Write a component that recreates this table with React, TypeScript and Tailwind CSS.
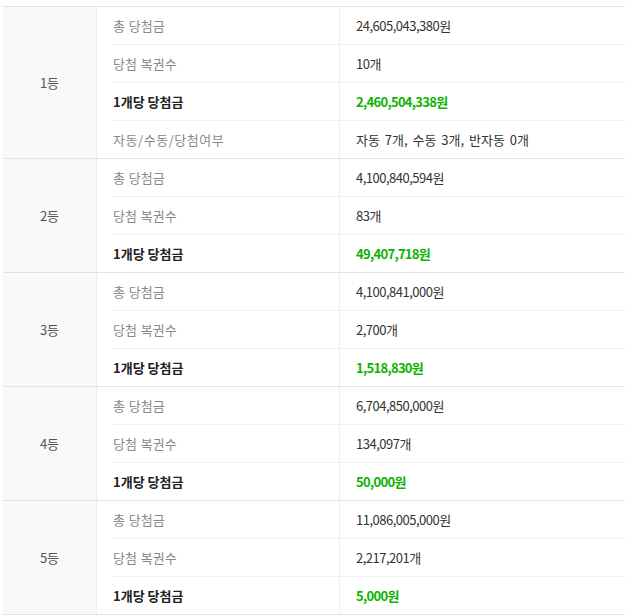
import * as React from "react";

type Row = { label: string; value: string; strong?: boolean; phrase?: boolean };
type Rank = { rank: string; rows: Row[] };

const data: Rank[] = [
    {
        rank: "1등",
        rows: [
            { label: "총 당첨금", value: "24,605,043,380원" },
            { label: "당첨 복권수", value: "10개" },
            { label: "1개당 당첨금", value: "2,460,504,338원", strong: true },
            { label: "자동/수동/당첨여부", value: "자동 7개, 수동 3개, 반자동 0개", phrase: true },
        ],
    },
    {
        rank: "2등",
        rows: [
            { label: "총 당첨금", value: "4,100,840,594원" },
            { label: "당첨 복권수", value: "83개" },
            { label: "1개당 당첨금", value: "49,407,718원", strong: true },
        ],
    },
    {
        rank: "3등",
        rows: [
            { label: "총 당첨금", value: "4,100,841,000원" },
            { label: "당첨 복권수", value: "2,700개" },
            { label: "1개당 당첨금", value: "1,518,830원", strong: true },
        ],
    },
    {
        rank: "4등",
        rows: [
            { label: "총 당첨금", value: "6,704,850,000원" },
            { label: "당첨 복권수", value: "134,097개" },
            { label: "1개당 당첨금", value: "50,000원", strong: true },
        ],
    },
    {
        rank: "5등",
        rows: [
            { label: "총 당첨금", value: "11,086,005,000원" },
            { label: "당첨 복권수", value: "2,217,201개" },
            { label: "1개당 당첨금", value: "5,000원", strong: true },
        ],
    },
];

function Label({ row }: { row: Row }) {
    if (row.strong) {
        return <span className="font-bold text-[#222]">{row.label}</span>;
    }
    if (row.phrase) {
        // slashes render a bit wider in the original font
        return <span className="text-[#888] tracking-[0.55px]">{row.label}</span>;
    }
    return <span className="text-[#888] [word-spacing:1px]">{row.label}</span>;
}

function Value({ row }: { row: Row }) {
    if (row.strong) {
        return <span className="font-bold text-[#0bb300] tracking-[-0.7px]">{row.value}</span>;
    }
    if (row.phrase) {
        return <span className="text-[#333] [word-spacing:2px]">{row.value}</span>;
    }
    return <span className="text-[#333] tracking-[-0.5px]">{row.value}</span>;
}

function RankGroup({ rank, rows }: Rank) {
    return (
        <div className="flex border-b border-[#e3e3e3]">
            <div className="w-[94px] shrink-0 bg-[#f8f9fb] border-r border-[#efefef] flex items-center justify-center text-[#555]">
                {rank}
            </div>
            <div className="flex-1 flex flex-col">
                {rows.map((row, i) => {
                    const last = i === rows.length - 1;
                    return (
                        <div key={row.label} className={last ? "flex h-[37px]" : "flex h-[38px]"}>
                            <div className="w-[242px] shrink-0 pl-[15px]">
                                <div
                                    className={
                                        last
                                            ? "h-full flex items-center pl-px"
                                            : "h-full flex items-center pl-px border-b border-[#f1f1f1]"
                                    }
                                >
                                    <Label row={row} />
                                </div>
                            </div>
                            <div
                                className={
                                    last
                                        ? "flex-1 flex items-center pl-4 border-l border-[#efefef]"
                                        : "flex-1 flex items-center pl-4 border-l border-[#efefef] border-b border-b-[#f1f1f1]"
                                }
                            >
                                <Value row={row} />
                            </div>
                        </div>
                    );
                })}
            </div>
        </div>
    );
}

export default function App() {
    return (
        <div className="bg-white w-[625px] h-[616px] pt-[6px] pl-[3px] overflow-hidden font-['Noto_Sans_CJK_KR',sans-serif] text-[13px] leading-none">
            <div className="border-t border-[#e3e3e3] w-[640px]">
                {data.map((g) => (
                    <RankGroup key={g.rank} {...g} />
                ))}
            </div>
        </div>
    );
}
